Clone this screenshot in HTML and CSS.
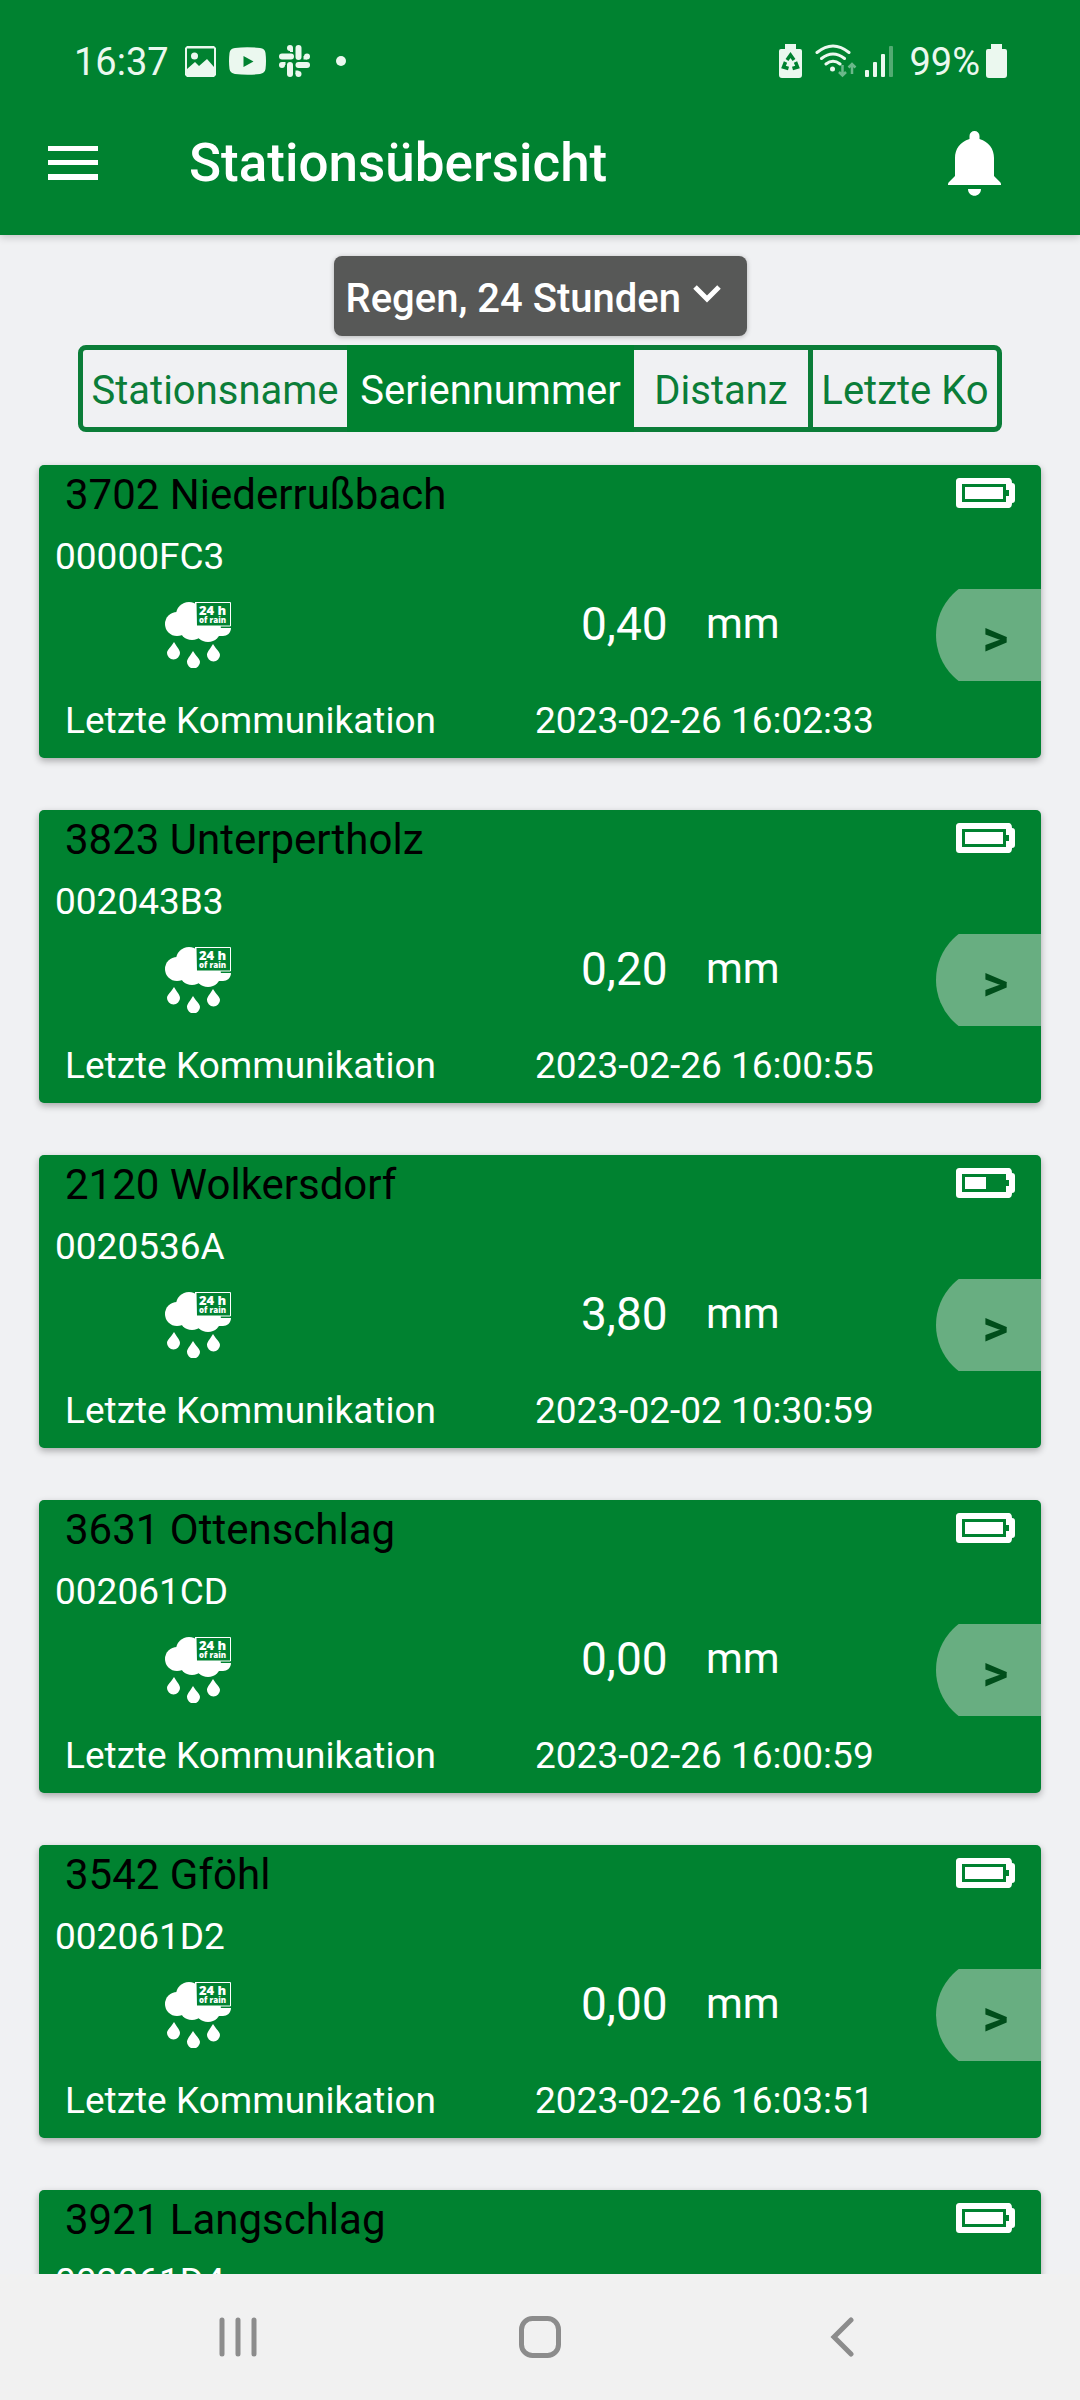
FILE: index.html
```html
<!DOCTYPE html>
<html lang="de">
<head>
<meta charset="utf-8">
<meta name="viewport" content="width=device-width, initial-scale=1">
<title>Stationsübersicht</title>
<link rel="stylesheet" href="styles.css">
</head>
<body>
<svg class="symbols" aria-hidden="true">
  <symbol id="rain" viewBox="0 0 66 66">
    <g fill="#fff">
      <circle cx="12" cy="22" r="12"/><circle cx="24" cy="13" r="13"/><circle cx="27" cy="25" r="13"/>
      <circle cx="43" cy="27" r="13"/><path d="M30 0h4v26h32c0 5-4 8-8 8H30z"/>
      <path d="M9 40c3 5 6 8 6 11a6 6 0 0 1-13 0c0-3 4-6 7-11zM28 49c3 5 7 8 7 11a6 6 0 0 1-13 0c0-3 3-6 6-11zM48 42c3 5 7 8 7 11a6 6 0 0 1-13 0c0-3 3-6 6-11z"/>
    </g>
    <path d="M31 0h35v24H31z" fill="#008230"/>
    <path d="M31 .5h34.5V24H31.500z" fill="none" stroke="#fff"/>
  </symbol>
  <symbol id="battery-case" viewBox="0 0 59 30">
    <path fill="#fff" fill-rule="evenodd" d="M4 0h48c3 0 4 2 4 5 2 0 3 1 3 3v14c0 2-1 3-3 3 0 3-1 5-4 5H4c-3 0-4-1-4-4V4c0-3 1-4 4-4zM6 6v18h44v-6h3v-6h-3V6z"/>
  </symbol>
  <symbol id="battery-full" viewBox="0 0 59 30">
    <use href="#battery-case"/><path fill="#fff" d="M9 9h38v12H9z"/>
  </symbol>
  <symbol id="battery-half" viewBox="0 0 59 30">
    <use href="#battery-case"/><path fill="#fff" d="M9 9h21v12H9z"/>
  </symbol>
</svg>

<div class="app">
  <header class="top">
    <div class="status">
      <div class="status-group">
        <span class="clock">16:37</span>
        <svg width="31" height="31" viewBox="0 0 31 31"><path fill="currentColor" fill-rule="evenodd" d="M2 0h27l2 2v27l-2 2H2l-2-2V2zM2 2.500V23l8-7 4 4 8-7 7 8V2.500z"/><circle cx="9.500" cy="10" r="3.500" fill="currentColor"/></svg>
        <svg width="37" height="28" viewBox="0 0 37 28"><path fill="currentColor" fill-rule="evenodd" d="M6 1q12-1.500 25 0 5 .5 5.500 5 1 8 0 16-.5 4-5.500 5-12 1.500-25 0-5-1-5.500-5-1-8 0-16Q1 1.500 6 1zM14.500 9v11l10-5.500z"/></svg>
        <svg width="31" height="32" viewBox="0 0 31 32" fill="currentColor"><rect x="8" width="6" height="6" rx="3"/><path d="M11 3h3v4h-3z"/><rect x="16.500" width="6" height="15" rx="3"/><rect y="8.500" width="15" height="6" rx="3"/><rect x="25" y="8.500" width="6" height="6" rx="3"/><path d="M24.500 11H28v3.500h-3.500z"/><rect x="16.500" y="17" width="14.500" height="6" rx="3"/><rect y="17" width="6" height="6" rx="3"/><path d="M3 17h3.500v3H3z"/><rect x="8" y="17" width="6" height="15" rx="3"/><rect x="16.500" y="26" width="6" height="6" rx="3"/><path d="M16.500 25.500h3V29h-3z"/></svg>
        <span class="more-dot"></span>
      </div>
      <div class="status-group status-right">
        <svg class="saver" width="23" height="34" viewBox="0 0 23 34"><path fill="currentColor" d="M6 0h11v5h4q2 0 2 2v24q0 3-3 3H3q-3 0-3-3V7q0-2 2-2h4z"/><g fill="none" stroke="#008230" stroke-width="3.500"><path d="M8 16l3.500-5 3.500 5M16.500 18l2 5-5 1.500M9.500 24.500l-5-1.500 2-5"/></g></svg>
        <svg class="wifi" width="42" height="34" viewBox="0 0 42 34"><g fill="none" stroke="currentColor" stroke-width="3" stroke-linecap="round"><path d="M2 8.500q16-13 32 0M6.500 14.500q11.500-9 23 0M11 20q7-5.500 14 0"/></g><circle cx="17.500" cy="25" r="2.500" fill="currentColor"/><g fill="none" stroke="#6bb88a" stroke-width="2.500"><path d="M27.500 21v10M24 28l3.500 3.500L31 28M37 30V20M33.500 23.500L37 20l3.500 3.500"/></g></svg>
        <svg class="signal" width="28" height="31" viewBox="0 0 28 31" fill="currentColor"><rect y="24" width="4" height="7" rx="1"/><rect x="8" y="16" width="4" height="15" rx="1"/><rect x="16" y="8" width="4" height="23" rx="1"/><rect x="24" width="4" height="31" rx="1" opacity=".35"/></svg>
        <span class="charge">99%</span>
        <svg width="21" height="34" viewBox="0 0 21 34"><path fill="currentColor" d="M5 0h11v5h3q2 0 2 2v24q0 3-3 3H3q-3 0-3-3V7q0-2 2-2h3z"/></svg>
      </div>
    </div>
    <div class="bar">
      <button class="icon-button" type="button" aria-label="Menü">
        <svg width="50" height="34" viewBox="0 0 50 34" fill="currentColor"><path d="M0 0h50v5H0zM0 14h50v5H0zM0 28h50v6H0z"/></svg>
      </button>
      <h1 class="title">Stationsübersicht</h1>
      <button class="icon-button" type="button" aria-label="Benachrichtigungen">
        <svg width="53" height="65" viewBox="0 0 53 65" fill="currentColor"><path d="M21.500 8V5a5 5 0 0 1 10 0v3C41 11 46 18 46 27v18l6 6c1 1 1 2 1 3H0c0-1 0-2 1-3l6-6V27C7 18 12 11 21.500 8zM20 58h13c0 9-13 9-13 0z"/></svg>
      </button>
    </div>
  </header>

  <main class="content">
    <label class="picker">
      <select class="picker-select" aria-label="Messwert">
        <option>Regen, 24 Stunden</option>
      </select>
      <svg class="picker-arrow" width="28" height="18" viewBox="0 0 28 18" fill="none" stroke="#fff" stroke-width="5"><path d="M2 2l12 12L26 2"/></svg>
    </label>

    <div class="tabs" role="group" aria-label="Sortierung">
      <button class="tab" type="button">Stationsname</button>
      <button class="tab tab-active" type="button" aria-pressed="true">Seriennummer</button>
      <button class="tab tab-divided" type="button">Distanz</button>
      <button class="tab" type="button">Letzte Ko</button>
    </div>

    <div class="stations">
      <article class="card">
        <div class="card-head"><h2 class="name">3702 Niederrußbach</h2><svg class="battery"><use href="#battery-full"/></svg></div>
        <p class="serial">00000FC3</p>
        <div class="reading"><svg class="rain" viewBox="0 0 66 66"><use href="#rain"/><text class="rain-hours" x="34" y="13">24 h</text><text class="rain-label" x="34" y="21">of rain</text></svg><span class="value">0,40</span><span class="unit">mm</span><button class="open" type="button" aria-label="Details">&gt;</button></div>
        <div class="contact"><span>Letzte Kommunikation</span><time>2023-02-26 16:02:33</time></div>
      </article>
      <article class="card">
        <div class="card-head"><h2 class="name">3823 Unterpertholz</h2><svg class="battery"><use href="#battery-full"/></svg></div>
        <p class="serial">002043B3</p>
        <div class="reading"><svg class="rain" viewBox="0 0 66 66"><use href="#rain"/><text class="rain-hours" x="34" y="13">24 h</text><text class="rain-label" x="34" y="21">of rain</text></svg><span class="value">0,20</span><span class="unit">mm</span><button class="open" type="button" aria-label="Details">&gt;</button></div>
        <div class="contact"><span>Letzte Kommunikation</span><time>2023-02-26 16:00:55</time></div>
      </article>
      <article class="card">
        <div class="card-head"><h2 class="name">2120 Wolkersdorf</h2><svg class="battery"><use href="#battery-half"/></svg></div>
        <p class="serial">0020536A</p>
        <div class="reading"><svg class="rain" viewBox="0 0 66 66"><use href="#rain"/><text class="rain-hours" x="34" y="13">24 h</text><text class="rain-label" x="34" y="21">of rain</text></svg><span class="value">3,80</span><span class="unit">mm</span><button class="open" type="button" aria-label="Details">&gt;</button></div>
        <div class="contact"><span>Letzte Kommunikation</span><time>2023-02-02 10:30:59</time></div>
      </article>
      <article class="card">
        <div class="card-head"><h2 class="name">3631 Ottenschlag</h2><svg class="battery"><use href="#battery-full"/></svg></div>
        <p class="serial">002061CD</p>
        <div class="reading"><svg class="rain" viewBox="0 0 66 66"><use href="#rain"/><text class="rain-hours" x="34" y="13">24 h</text><text class="rain-label" x="34" y="21">of rain</text></svg><span class="value">0,00</span><span class="unit">mm</span><button class="open" type="button" aria-label="Details">&gt;</button></div>
        <div class="contact"><span>Letzte Kommunikation</span><time>2023-02-26 16:00:59</time></div>
      </article>
      <article class="card">
        <div class="card-head"><h2 class="name">3542 Gföhl</h2><svg class="battery"><use href="#battery-full"/></svg></div>
        <p class="serial">002061D2</p>
        <div class="reading"><svg class="rain" viewBox="0 0 66 66"><use href="#rain"/><text class="rain-hours" x="34" y="13">24 h</text><text class="rain-label" x="34" y="21">of rain</text></svg><span class="value">0,00</span><span class="unit">mm</span><button class="open" type="button" aria-label="Details">&gt;</button></div>
        <div class="contact"><span>Letzte Kommunikation</span><time>2023-02-26 16:03:51</time></div>
      </article>
      <article class="card">
        <div class="card-head"><h2 class="name">3921 Langschlag</h2><svg class="battery"><use href="#battery-full"/></svg></div>
        <p class="serial">002061D4</p>
      </article>
    </div>
  </main>

  <nav class="system">
    <button class="icon-button" type="button" aria-label="Letzte Apps"><svg width="38" height="42" viewBox="0 0 38 42" stroke="currentColor" stroke-width="5" stroke-linecap="round"><path d="M3 4v34M19 4v34M35 4v34"/></svg></button>
    <button class="icon-button" type="button" aria-label="Startseite"><svg width="42" height="42" viewBox="0 0 42 42"><rect x="2.500" y="2.500" width="37" height="37" rx="11" fill="none" stroke="currentColor" stroke-width="5"/></svg></button>
    <button class="icon-button" type="button" aria-label="Zurück"><svg width="24" height="42" viewBox="0 0 24 42" fill="none" stroke="currentColor" stroke-width="5" stroke-linecap="round"><path d="M21 4L4 21l17 17"/></svg></button>
  </nav>
</div>
</body>
</html>
```
FILE: styles.css
```css
:root {
  --green: #008230;
  --page: #f0f1f3;
}

* {
  box-sizing: border-box;
}

body {
  margin: 0;
  background: var(--page);
  font-family: Roboto, "Noto Sans", sans-serif;
  color: #fff;
}

button,
select {
  margin: 0;
  border: 0;
  font-family: inherit;
}

svg {
  display: block;
  flex: none;
}

.symbols {
  display: none;
}

.app {
  display: flex;
  flex-direction: column;
  height: 100vh;
}

/* Status and title bar */
.top {
  flex: none;
  padding-bottom: 26px;
  background: var(--green);
  box-shadow: 0 2px 8px rgba(0, 0, 0, 0.2);
}

.status {
  display: flex;
  justify-content: space-between;
  padding: 36px 73px 0 74px;
  color: #ebf8ef;
}

.status-group {
  display: flex;
  align-items: center;
  gap: 13px;
  height: 50px;
}

.status-right {
  gap: 16px;
}

.clock,
.charge {
  padding-top: 2px;
  font-size: 38px;
  line-height: 50px;
}

.clock {
  margin-right: 3px;
}

.charge {
  margin-right: -10px;
}

.saver {
  margin-right: -3px;
}

.signal {
  margin-left: -8px;
}

.more-dot {
  width: 10px;
  height: 10px;
  margin-left: 13px;
  border-radius: 50%;
  background: currentColor;
}

.bar {
  display: flex;
  align-items: center;
  padding: 31px 79px 0 48px;
}

.title {
  flex: 1;
  margin: 0 0 0 91px;
  font-size: 53px;
  font-weight: 500;
  line-height: 92px;
}

.icon-button {
  display: grid;
  place-items: center;
  padding: 0;
  background: none;
  color: inherit;
}

/* Filters */
.content {
  flex: 1;
  min-height: 0;
  overflow: hidden;
  padding: 21px 39px 0;
}

.picker {
  display: grid;
  align-items: center;
  width: 413px;
  height: 80px;
  margin: 0 auto;
}

.picker-select,
.picker-arrow {
  grid-area: 1 / 1;
}

.picker-select {
  appearance: none;
  width: 100%;
  height: 100%;
  padding: 4px 12px 0;
  border-radius: 8px;
  background: #575857;
  box-shadow: 0 1px 5px rgba(0, 0, 0, 0.25);
  color: #fff;
  font-size: 40px;
  font-weight: 500;
}

.picker-arrow {
  justify-self: end;
  margin: 0 26px 4px 0;
  pointer-events: none;
}

.tabs {
  display: grid;
  grid-template-columns: 264fr 287fr 179fr 184fr;
  height: 87px;
  margin: 9px 39px 33px;
  border: 5px solid #0b7d38;
  border-radius: 8px;
}

.tab {
  padding: 4px 0 0;
  background: none;
  color: #0b7d38;
  font-size: 40px;
  white-space: nowrap;
}

.tab-active {
  margin: -5px 0;
  background: var(--green);
  color: #fff;
}

.tab-divided {
  border-right: 5px solid #0b7d38;
}

/* Station cards */
.stations {
  display: grid;
  gap: 52px;
}

.card {
  height: 293px;
  border-radius: 5px;
  background: var(--green);
  box-shadow: 0 3px 7px rgba(0, 0, 0, 0.3);
}

.card-head {
  display: flex;
  align-items: center;
  justify-content: space-between;
  padding: 0 26px;
}

.name {
  margin: 0;
  padding-top: 5px;
  color: #000;
  font-size: 42px;
  font-weight: 400;
  line-height: 50px;
}

.battery {
  width: 59px;
  height: 30px;
}

.serial {
  margin: 13px 0 0 16px;
  font-size: 37px;
  line-height: 48px;
}

.reading {
  display: grid;
  grid-template-columns: 542fr 125fr 230fr 105fr;
  align-items: center;
  height: 116px;
  margin-top: -4px;
}

.rain {
  width: 66px;
  height: 66px;
  margin-left: 126px;
  fill: #fff;
}

.rain-hours {
  font: 800 13px "Open Sans", sans-serif;
}

.rain-label {
  font: 800 8px "Open Sans", sans-serif;
}

.value,
.unit {
  margin-bottom: 22px;
  line-height: 56px;
}

.value {
  font-size: 46px;
}

.unit {
  font-size: 42px;
}

/* The round left end is cut flat at the top and bottom */
.open {
  justify-self: end;
  width: 105px;
  height: 116px;
  padding: 6px 0 0 14px;
  border-radius: 58px 0 0 58px;
  clip-path: inset(12px 0);
  background: #68ae81;
  color: #004e1b;
  font-size: 50px;
  font-weight: 700;
}

.contact {
  display: grid;
  grid-template-columns: 470fr 506fr;
  margin-top: 4px;
  padding-left: 26px;
  font-size: 37px;
  line-height: 48px;
}

/* System navigation */
.system {
  position: relative;
  display: grid;
  grid-template-columns: repeat(3, 28%);
  flex: none;
  justify-content: center;
  height: 126px;
  background: #f1f1f1;
  color: #8c8c8c;
}
```
